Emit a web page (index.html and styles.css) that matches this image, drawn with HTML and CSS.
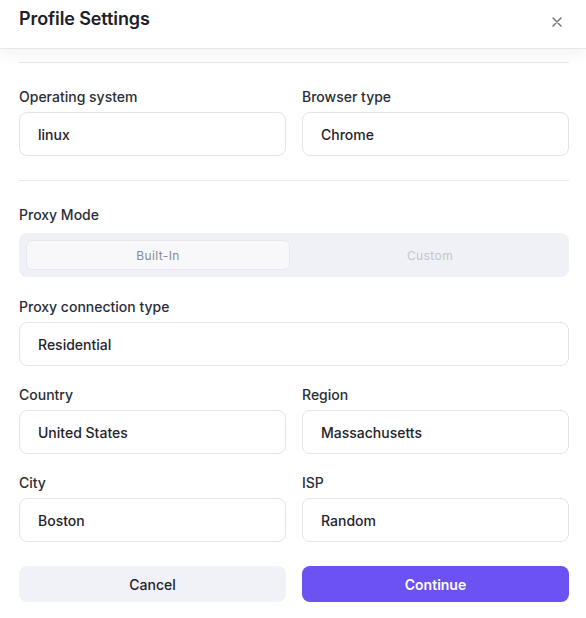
FILE: index.html
```html
<!DOCTYPE html>
<html lang="en">
<head>
<meta charset="utf-8">
<title>Profile Settings</title>
<link rel="stylesheet" href="styles.css">
</head>
<body>
<div class="modal">
  <header class="modal-header">
    <h1 class="title">Profile Settings</h1>
    <button class="close" aria-label="Close">
      <svg width="10" height="10" viewBox="0 0 10 10"><path d="M1 1L9 9M9 1L1 9" stroke="#6b7079" stroke-width="1.4" stroke-linecap="round"/></svg>
    </button>
  </header>
  <main class="content">
    <hr class="divider">
    <div class="row">
      <div class="field">
        <label class="label">Operating system</label>
        <div class="input">linux</div>
      </div>
      <div class="field">
        <label class="label">Browser type</label>
        <div class="input">Chrome</div>
      </div>
    </div>
    <hr class="divider">
    <div class="field">
      <label class="label">Proxy Mode</label>
      <div class="segment">
        <div class="seg-item active">Built-In</div>
        <div class="seg-item">Custom</div>
      </div>
    </div>
    <div class="field">
      <label class="label">Proxy connection type</label>
      <div class="input">Residential</div>
    </div>
    <div class="row">
      <div class="field">
        <label class="label">Country</label>
        <div class="input">United States</div>
      </div>
      <div class="field">
        <label class="label">Region</label>
        <div class="input">Massachusetts</div>
      </div>
    </div>
    <div class="row">
      <div class="field">
        <label class="label">City</label>
        <div class="input">Boston</div>
      </div>
      <div class="field">
        <label class="label">ISP</label>
        <div class="input">Random</div>
      </div>
    </div>
    <div class="actions">
      <button class="btn btn-cancel">Cancel</button>
      <button class="btn btn-primary">Continue</button>
    </div>
  </main>
</div>
</body>
</html>
```
FILE: styles.css
```css
* { box-sizing: border-box; }
html, body {
  margin: 0;
  padding: 0;
  background: #ffffff;
  font-family: "Inter", "Noto Sans", sans-serif;
  color: #1f2329;
}
.modal {
  width: 586px;
  height: 618px;
  background: #fff;
}
.modal-header {
  height: 49px;
  padding: 0 19px;
  display: flex;
  justify-content: space-between;
  align-items: flex-start;
  border-bottom: 1px solid #e6e7eb;
  box-shadow: 0 4px 18px rgba(20, 24, 40, 0.06);
  position: relative;
  z-index: 1;
}
.title {
  margin: 7px 0 0;
  font-size: 18px;
  line-height: 24px;
  font-weight: 600;
  color: #1d2127;
  letter-spacing: -0.1px;
}
.close {
  margin-top: 17px;
  margin-right: 5px;
  width: 10px;
  height: 10px;
  padding: 0;
  border: 0;
  background: none;
  display: flex;
}
.content {
  padding: 13px 17px 0 19px;
  display: flex;
  flex-direction: column;
  gap: 19px;
}
.divider {
  margin: 0;
  border: 0;
  border-top: 1px solid #e8e9ee;
  height: 0;
}
.content > .divider { margin: 0 0 5px; }
.content > .row + .divider { margin: 5px 0 5px; }
.row {
  display: grid;
  grid-template-columns: 1fr 1fr;
  gap: 16px;
}
.field {
  display: flex;
  flex-direction: column;
  gap: 5px;
}
.label {
  font-size: 14px;
  line-height: 20px;
  font-weight: 500;
  color: #2a2e35;
}
.input {
  height: 44px;
  border: 1px solid #e3e4ea;
  border-radius: 8px;
  padding: 0 18px;
  display: flex;
  align-items: center;
  font-size: 14px;
  font-weight: 500;
  color: #1f2329;
  background: #fff;
}
.segment {
  margin-top: 3px;
  height: 44px;
  margin-bottom: 1px;
  background: #f0f1f6;
  border-radius: 8px;
  padding: 7px;
  display: grid;
  grid-template-columns: 1fr 1fr;
  gap: 8px;
}
.seg-item {
  display: flex;
  align-items: center;
  justify-content: center;
  font-size: 12px;
  letter-spacing: 0.4px;
  color: #c3c5cc;
  border-radius: 6px;
  border: 1px solid transparent;
}
.seg-item.active {
  background: #f8f8fa;
  border-color: #e8e9ee;
  color: #878b94;
}
.actions {
  margin-top: 5px;
  display: grid;
  grid-template-columns: 1fr 1fr;
  gap: 16px;
}
.btn {
  height: 36px;
  border: 0;
  border-radius: 8px;
  font-family: "Inter", "Noto Sans", sans-serif;
  font-size: 14px;
  font-weight: 500;
  cursor: pointer;
}
.btn-cancel {
  background: #f1f2f7;
  color: #1f2329;
}
.btn-primary {
  background: #6c52f3;
  color: #ffffff;
  font-weight: 600;
}
```
